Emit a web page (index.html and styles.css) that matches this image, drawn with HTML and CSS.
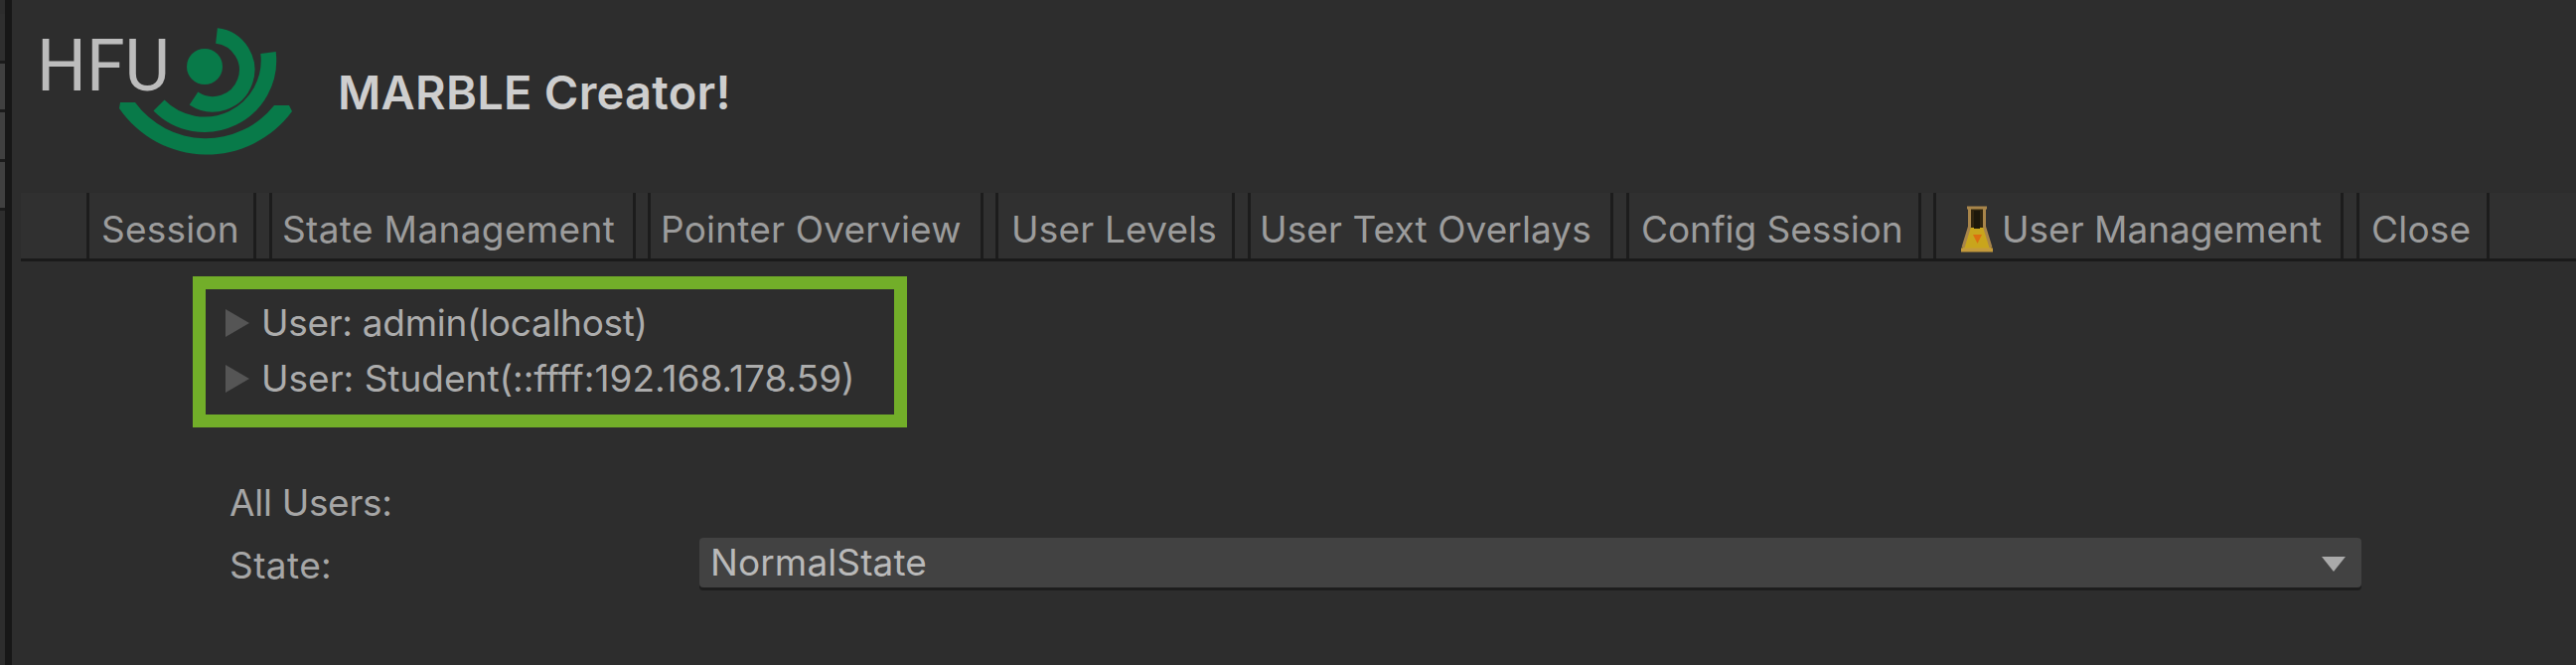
FILE: index.html
```html
<!DOCTYPE html>
<html lang="en">
<head>
<meta charset="utf-8">
<title>MARBLE Creator</title>
<link rel="stylesheet" href="styles.css">
</head>
<body>
<div class="window">
  <div class="gutter"><i></i><i></i><i></i><i></i></div>
  <main class="panel">
    <header class="header">
      <svg class="logo" width="290" height="194" viewBox="12 0 290 194">
        <text class="logo-text" x="37" y="91" textLength="134" lengthAdjust="spacingAndGlyphs">HFU</text>
        <circle cx="206" cy="67" r="18" fill="#087a49"/>
        <g fill="none" stroke="#087a49" stroke-width="15.500">
          <path d="M218 36A34.500 34.500 0 1 1 195 99"/>
          <path d="M270 53A64.500 64.500 0 0 1 160 106"/>
        </g>
        <path fill="#087a49" d="M121 103H136A88 88 0 0 0 276 106H291L294 112A106.600 106.600 0 0 1 120 109Z"/>
      </svg>
      <h1 class="title">MARBLE Creator!</h1>
    </header>
    <nav class="tabs">
      <a class="tab session">Session</a>
      <a class="tab states">State Management</a>
      <a class="tab pointer">Pointer Overview</a>
      <a class="tab levels">User Levels</a>
      <a class="tab overlays">User Text Overlays</a>
      <a class="tab config">Config Session</a>
      <a class="tab management">
        <svg class="flask" width="34" height="50" viewBox="0 0 34 50">
          <path d="M9 4V23L2 47H32L25 23V4Z" fill="#30250f"/>
          <path d="M9.500 24H24.500L32 46H2Z" fill="#c9a51c"/>
          <path d="M7 4H27M9.500 4V23L3 44M24.500 4V23L31 44" fill="none" stroke="#a8854a" stroke-width="3"/>
          <path d="M1 46.500H33" stroke="#c49a3c" stroke-width="4"/>
          <path d="M14 7H20V25H14Z" fill="#1d180b"/>
          <path d="M13 31H22L17.500 40Z" fill="#dc7010"/>
        </svg>User Management</a>
      <a class="tab close">Close</a>
    </nav>
    <section class="content">
      <div class="users">
        <div class="user admin"><svg width="24" height="28"><path d="M0 0L24 14L0 28Z"/></svg><span>User: admin(localhost)</span></div>
        <div class="user"><svg width="24" height="28"><path d="M0 0L24 14L0 28Z"/></svg><span>User: Student(::ffff:192.168.178.59)</span></div>
      </div>
      <div class="all">All Users:</div>
      <div class="field">
        <label class="label">State:</label>
        <div class="select"><span>NormalState</span><svg width="24" height="15"><path d="M0 0H24L12 15Z"/></svg></div>
      </div>
    </section>
  </main>
</div>
</body>
</html>
```
FILE: styles.css
```css
* { box-sizing: border-box; }
body { margin: 0; background: #2d2d2d; color: #a6a6a6; font: 37px/56px Inter, sans-serif; overflow: hidden; }
.window { display: flex; width: 2593px; height: 669px; }
.gutter { width: 12px; height: 669px; border-right: 7px solid #171717; padding-top: 14px; }
.gutter i { display: block; height: 49.500px; background: #404040; border-bottom: 3px solid #1b1b1b; }
.gutter i:first-child { background: #2f2f2f; }
.panel { flex: 1; }
.header { height: 194px; display: flex; }
.logo-text { font: 400 73px Roboto, sans-serif; fill: #bcbcbc; }
.title { margin: 65px 0 0 38px; font-size: 47px; line-height: 56px; font-weight: 600; letter-spacing: .25px; color: #cecece; white-space: nowrap; }
.tabs { height: 69px; margin-left: 9px; padding-left: 66px; display: flex; background: #303030; border-bottom: 3px solid #1a1a1a; color: #9c9c9c; }
.tab { height: 66px; margin-right: 13px; padding-top: 9px; border: solid #1c1c1c; border-width: 0 3px; white-space: nowrap; letter-spacing: .2px; }
.session { width: 171px; padding-left: 12px; }
.states { width: 369px; padding-left: 10px; margin-right: 12px; letter-spacing: .35px; }
.pointer { width: 338px; padding-left: 10px; margin-right: 12px; }
.levels { width: 241px; padding-left: 13px; }
.overlays { width: 368px; padding-left: 9px; letter-spacing: .1px; }
.config { width: 297px; padding-left: 12px; margin-right: 12px; letter-spacing: -.05px; }
.management { width: 413px; padding-left: 24px; display: flex; letter-spacing: 0; }
.flask { margin: 2px 8px 0 0; }
.close { width: 134px; padding-left: 12px; letter-spacing: .2px; }
.content { padding: 15px 0 0 182px; }
.users { width: 719px; height: 152px; border: 13px solid #72ae29; padding: 5.500px 0 0 20px; }
.user { height: 56px; display: flex; align-items: center; gap: 12px; color: #acacac; }
.user svg { fill: #555; }
.admin { letter-spacing: -.3px; }
.all { margin: 48px 0 7px 37px; letter-spacing: -.3px; }
.field { display: flex; margin-left: 36px; }
.label { width: 474px; padding-left: 1px; letter-spacing: .4px; }
.select { width: 1673px; height: 50px; line-height: 50px; padding: 0 16px 0 11px; display: flex; justify-content: space-between; background: #424242; border-radius: 4px; box-shadow: 0 3px 0 #1d1d1d; color: #b9b9b9; letter-spacing: .1px; }
.select svg { margin-top: 19px; fill: #aaa; }
```
